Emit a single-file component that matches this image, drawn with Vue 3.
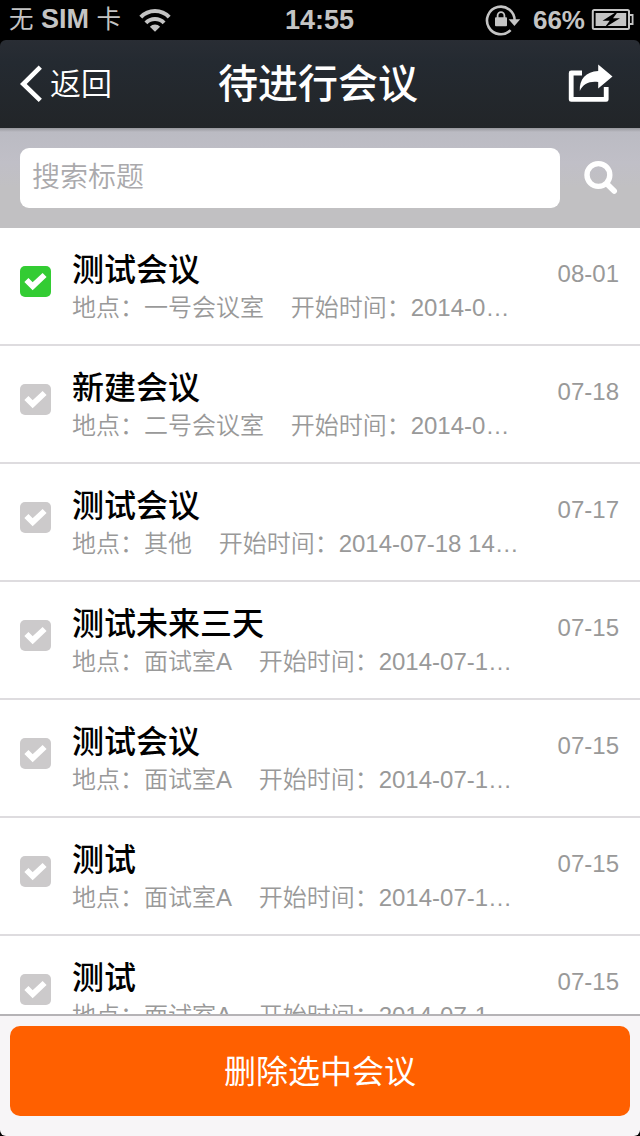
<script setup>
import { ref } from 'vue'

const gap = '\u00a0\u00a0\u00a0\u00a0'
const meetings = ref([
  { title: '测试会议', place: '一号会议室', start: '2014-0…', date: '08-01', checked: true },
  { title: '新建会议', place: '二号会议室', start: '2014-0…', date: '07-18', checked: false },
  { title: '测试会议', place: '其他', start: '2014-07-18 14…', date: '07-17', checked: false },
  { title: '测试未来三天', place: '面试室A', start: '2014-07-1…', date: '07-15', checked: false },
  { title: '测试会议', place: '面试室A', start: '2014-07-1…', date: '07-15', checked: false },
  { title: '测试', place: '面试室A', start: '2014-07-1…', date: '07-15', checked: false },
  { title: '测试', place: '面试室A', start: '2014-07-1…', date: '07-15', checked: false },
])
</script>

<template>
  <div class="screen">
    <div class="status">
      <div class="carrier">
        <span class="carrier-text"><span class="thin">无</span> SIM <span class="thin">卡</span></span>
        <svg class="wifi" width="32" height="24" viewBox="0 0 32 24">
          <g fill="none" stroke="#c4c4c4" stroke-width="4">
            <path d="M1.8 9.2A19.5 19.5 0 0 1 30.2 9.2" />
            <path d="M6.9 14.8A12.6 12.6 0 0 1 25.1 14.8" />
          </g>
          <path d="M16 23.8l-5.1-5.1a7 7 0 0 1 10.2 0z" fill="#c4c4c4" />
        </svg>
      </div>
      <span class="clock">14:55</span>
      <div class="power">
        <svg width="36" height="32" viewBox="0 0 36 32">
          <path d="M25.6 26.2A13.8 13.8 0 1 1 29.6 17" fill="none" stroke="#c4c4c4" stroke-width="2.6" />
          <path d="M23.6 15.2h11.6l-5.8 6.8z" fill="#c4c4c4" />
          <rect x="10" y="13.2" width="12" height="9" rx="1" fill="#c4c4c4" />
          <path d="M12.6 14v-2.4a3.4 3.4 0 0 1 6.8 0V14" fill="none" stroke="#c4c4c4" stroke-width="1.8" />
        </svg>
        <span class="percent">66%</span>
        <svg width="44" height="22" viewBox="0 0 44 22">
          <rect x="1.8" y="1" width="36.2" height="19" rx="1.5" fill="none" stroke="#c4c4c4" stroke-width="2" />
          <rect x="4.6" y="4" width="30.6" height="13" fill="#c4c4c4" />
          <path d="M39 6h2.6v9H39" fill="none" stroke="#c4c4c4" stroke-width="1.8" />
          <path d="M26 2.5L11.5 11.8h7.2L13.5 18.8l15.5-9.6h-7l5-6.7z" fill="#000" />
        </svg>
      </div>
    </div>

    <header class="nav">
      <div class="back">
        <svg width="24" height="38" viewBox="0 0 24 38">
          <path d="M20.3 2.2L3.3 19l17 16.3" fill="none" stroke="#fff" stroke-width="4.6" />
        </svg>
        <span>返回</span>
      </div>
      <h1>待进行会议</h1>
      <svg class="share" width="46" height="40" viewBox="0 0 46 40">
        <path d="M14 9H3.2V35.4H38.2V23" fill="none" stroke="#fff" stroke-width="4.8" stroke-linejoin="round" />
        <path d="M30.2 0.5L44.5 12.5L30.2 24.5V18C22 16.8 15 19.5 11.8 27C11.2 15 18 7.7 30.2 7z" fill="#fff" />
      </svg>
    </header>

    <div class="search">
      <input type="text" placeholder="搜索标题" />
      <svg width="36" height="36" viewBox="0 0 36 36">
        <circle cx="15.4" cy="15" r="11.4" fill="none" stroke="#fff" stroke-width="5.4" />
        <path d="M24 24l7.2 7" stroke="#fff" stroke-width="5.6" stroke-linecap="round" />
      </svg>
    </div>

    <main class="list">
      <div v-for="(m, i) in meetings" :key="i" class="row">
        <div class="check" :class="{ on: m.checked }" @click="m.checked = !m.checked">
          <svg width="31" height="31" viewBox="0 0 31 31">
            <path d="M6.4 14L12.7 20.2L24.6 9" fill="none" stroke="#fff" stroke-width="5.8" />
          </svg>
        </div>
        <div class="info">
          <div class="title">{{ m.title }}</div>
          <div class="meta">地点：{{ m.place }}{{ gap }}开始时间：{{ m.start }}</div>
        </div>
        <div class="date">{{ m.date }}</div>
      </div>
    </main>

    <footer class="bottom">
      <button>删除选中会议</button>
    </footer>
  </div>
</template>

<style>
html,
body {
  margin: 0;
  background: #000;
  overflow: hidden;
}
</style>

<style scoped>
.screen {
  display: flex;
  flex-direction: column;
  width: 640px;
  height: 1136px;
  overflow: hidden;
  background: #000;
  font-family: "Liberation Sans", "Noto Sans CJK SC", sans-serif;
}
.status {
  flex: none;
  display: grid;
  grid-template-columns: 1fr auto 1fr;
  align-items: center;
  height: 40px;
  padding: 0 5px 2px 9px;
  box-sizing: border-box;
  color: #c4c4c4;
  font-weight: 700;
  font-size: 27px;
  line-height: 38px;
}
.carrier,
.power {
  display: flex;
  align-items: center;
}
.carrier {
  gap: 18px;
}
.carrier-text {
  white-space: nowrap;
}
.thin {
  font-weight: 400;
  font-size: 24.5px;
}
.clock {
  padding-right: 5px;
}
.power {
  justify-content: flex-end;
}
.power svg {
  flex: none;
}
.percent {
  margin: 0 6px 0 12px;
  font-size: 26px;
}
.nav {
  flex: none;
  display: grid;
  grid-template-columns: 1fr auto 1fr;
  align-items: center;
  height: 88px;
  padding: 0 26px 0 20px;
  box-sizing: border-box;
  border-radius: 6px 6px 0 0;
  background: linear-gradient(#292d34, #242a31 25%, #222528);
  color: #fff;
}
.back {
  display: flex;
  align-items: center;
  gap: 6px;
  font-size: 31px;
  font-weight: 350;
  line-height: 40px;
}
.back span {
  padding-top: 1px;
}
.nav h1 {
  margin: 0;
  padding-left: 2px;
  font-size: 40px;
  font-weight: 500;
  line-height: 88px;
}
.share {
  justify-self: end;
}
.search {
  flex: none;
  display: flex;
  align-items: center;
  height: 100px;
  padding: 0 20px;
  box-sizing: border-box;
  gap: 23px;
  background: linear-gradient(#97979c, #bbbbc3 4px, #c0bfc7 35px, #c1c0c2 60px);
}
.search input {
  width: 540px;
  height: 60px;
  padding: 0 12px;
  box-sizing: border-box;
  border: 0;
  border-radius: 9px;
  outline: none;
  background: #fff;
  font: 350 28px "Liberation Sans", "Noto Sans CJK SC", sans-serif;
}
.search input::placeholder {
  color: #aaa9ac;
  opacity: 1;
}
.list {
  flex: 1;
  min-height: 0;
  overflow: hidden;
  background: #fff;
}
.row {
  display: flex;
  height: 118px;
  padding: 0 21px 0 20px;
  box-sizing: border-box;
  border-bottom: 2px solid #dedcdf;
}
.check {
  flex: none;
  width: 31px;
  height: 31px;
  margin: 38px 21px 0 0;
  border-radius: 5px;
  background: #cccacb;
}
.check.on {
  background: #33cc33;
}
.check svg {
  display: block;
}
.info {
  flex: 1;
  min-width: 0;
  padding-top: 21px;
  white-space: nowrap;
}
.title {
  height: 41px;
  line-height: 42px;
  font-size: 32px;
  font-weight: 500;
  color: #000;
}
.meta {
  height: 36px;
  line-height: 36px;
  font-size: 24px;
  font-weight: 350;
  color: #999;
}
.date {
  margin-top: 32px;
  height: 28px;
  line-height: 28px;
  font-size: 24px;
  color: #999;
}
.bottom {
  flex: none;
  height: 122px;
  padding: 10px;
  box-sizing: border-box;
  border-top: 2px solid #b5b3b6;
  border-radius: 0 0 6px 6px;
  background: #f7f5f7;
}
.bottom button {
  display: block;
  width: 620px;
  height: 90px;
  padding: 2px 0 0;
  border: 0;
  border-radius: 10px;
  background: #ff6000;
  color: #fff;
  font: 400 32px/88px "Liberation Sans", "Noto Sans CJK SC", sans-serif;
}
</style>
